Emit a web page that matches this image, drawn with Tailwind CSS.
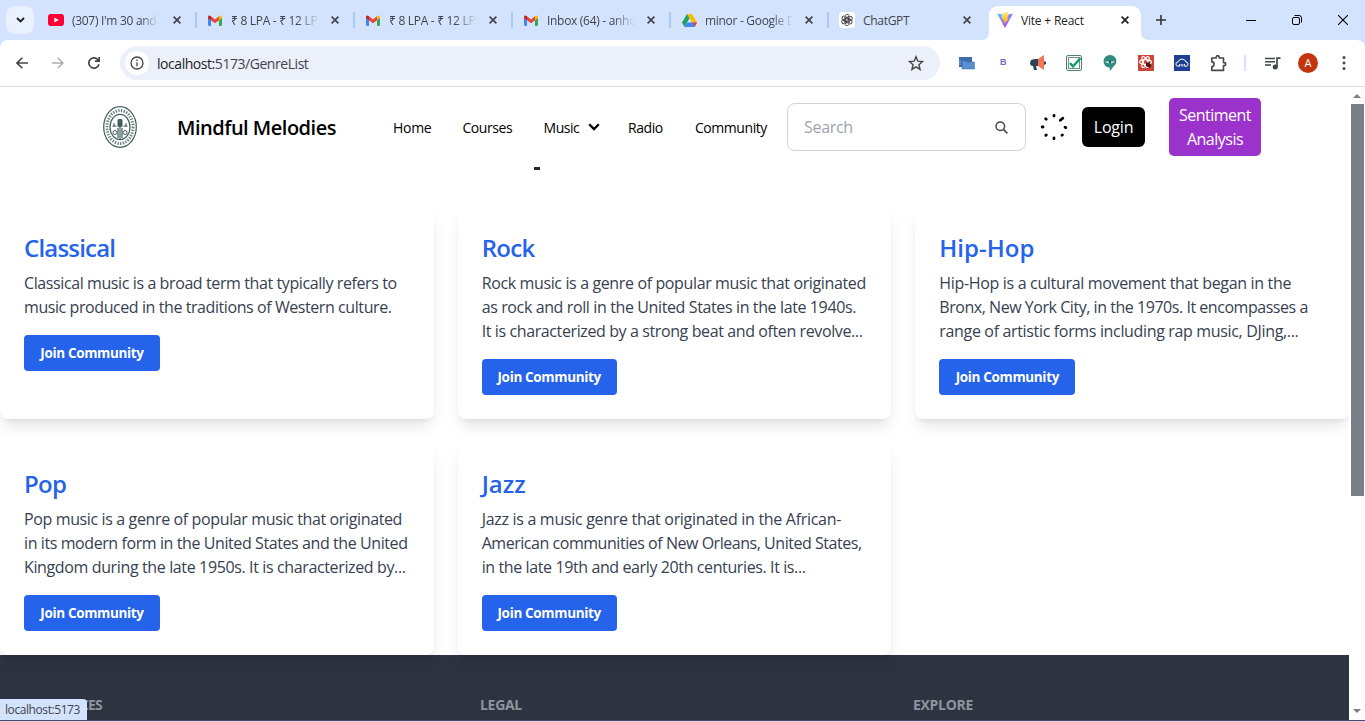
<!DOCTYPE html>
<html lang="en">
<head>
<meta charset="utf-8">
<title>Vite + React</title>
<script src="https://cdn.jsdelivr.net/npm/@tailwindcss/browser@4"></script>
</head>
<body class="h-[721px] w-[1365px] overflow-hidden bg-white font-['Open_Sans','Noto_Sans',sans-serif] text-black">
<svg class="hidden">
  <symbol id="gmail" viewBox="0 0 14 11"><path d="M0 2v7.600Q0 11 1.200 11H3V4.600L0 2z" fill="#4285f4"/><path d="M14 2v7.600q0 1.400-1.200 1.400H11V4.600z" fill="#34a853"/><path d="M3 1.300 7 4.500l4-3.200v3.900L7 8.300 3 5.200z" fill="#ea4335"/><path d="M0 1.800Q.3-.6 3 1.300v3.900L0 2.900z" fill="#c5221f"/><path d="M14 1.800Q13.700-.6 11 1.300v3.900l3-2.300z" fill="#fbbc04"/></symbol>
  <symbol id="x" viewBox="0 0 8 8"><path d="M.6.6l6.800 6.800M7.400.6L.6 7.400" stroke="currentColor" stroke-width="1.700"/></symbol>
</svg>
<div class="flex h-full flex-col">
  <header class="h-[87px] shrink-0 border-b border-[#dcdde0] bg-[#d3e2fd]">
    <div class="flex h-10 items-start text-[12px] tracking-[-0.3px] text-[#41454b]">
      <div class="ml-[6px] mt-[6px] flex h-7 w-7 items-center justify-center rounded-[9px] bg-[#e9f0fe]"><svg class="h-[6px] w-[9px]" viewBox="0 0 9 6" fill="none"><path d="M1 1l3.500 3.500L8 1" stroke="#1f1f1f" stroke-width="1.800"/></svg></div>
      <div class="flex h-10 w-[162px] items-center pl-[14px]">
        <svg class="h-3 w-4 shrink-0" viewBox="0 0 16 12"><rect width="16" height="12" rx="3" fill="#ff0033"/><path d="M6.300 3.400v5.200L10.800 6z" fill="#fff"/></svg>
        <div class="ml-2 w-[86px] overflow-hidden whitespace-nowrap pt-px mask-r-from-80%">(307) I'm 30 and</div>
        <svg class="ml-[15px] h-2 w-2 shrink-0"><use href="#x"/></svg>
      </div>
      <div class="flex h-10 w-[158px] items-center">
        <div class="-ml-[1px] h-4 w-[2px] bg-[#a8c7fa]"></div>
        <svg class="ml-[11px] h-[11px] w-[14px] shrink-0"><use href="#gmail"/></svg>
        <div class="ml-[9px] w-[88px] overflow-hidden whitespace-nowrap pt-px mask-r-from-75%">₹ 8 LPA - ₹ 12 LP</div>
        <svg class="ml-[12px] h-2 w-2 shrink-0"><use href="#x"/></svg>
      </div>
      <div class="flex h-10 w-[158px] items-center">
        <div class="-ml-[1px] h-4 w-[2px] bg-[#a8c7fa]"></div>
        <svg class="ml-[11px] h-[11px] w-[14px] shrink-0"><use href="#gmail"/></svg>
        <div class="ml-[9px] w-[88px] overflow-hidden whitespace-nowrap pt-px mask-r-from-75%">₹ 8 LPA - ₹ 12 LP</div>
        <svg class="ml-[12px] h-2 w-2 shrink-0"><use href="#x"/></svg>
      </div>
      <div class="flex h-10 w-[158px] items-center">
        <div class="-ml-[1px] h-4 w-[2px] bg-[#a8c7fa]"></div>
        <svg class="ml-[11px] h-[11px] w-[14px] shrink-0"><use href="#gmail"/></svg>
        <div class="ml-[9px] w-[88px] overflow-hidden whitespace-nowrap pt-px mask-r-from-75%">Inbox (64) - anho</div>
        <svg class="ml-[12px] h-2 w-2 shrink-0"><use href="#x"/></svg>
      </div>
      <div class="flex h-10 w-[158px] items-center">
        <div class="-ml-[1px] h-4 w-[2px] bg-[#a8c7fa]"></div>
        <svg class="ml-[11px] h-[13px] w-[15px] shrink-0" viewBox="0 0 15 13"><path d="M5 0h5l5 8.500h-5z" fill="#fbbc04"/><path d="M5 0l2.500 4.300L2.500 13 0 8.500z" fill="#1ea362"/><path d="M5 8.500h10L12.500 13h-10z" fill="#4285f4"/><path d="M10.500 8.500H15L12.600 13z" fill="#ea4335"/></svg>
        <div class="ml-[8px] w-[88px] overflow-hidden whitespace-nowrap pt-px mask-r-from-75%">minor - Google D</div>
        <svg class="ml-[12px] h-2 w-2 shrink-0"><use href="#x"/></svg>
      </div>
      <div class="flex h-10 w-[161px] items-center">
        <div class="-ml-[1px] h-4 w-[2px] bg-[#a8c7fa]"></div>
        <svg class="ml-[10px] h-4 w-4 shrink-0" viewBox="0 0 16 16"><rect width="16" height="16" rx="3" fill="#fff"/><g fill="none" stroke="#333" stroke-width=".9"><g id="petal"><path d="M5.800 8.900V4.700a2.400 2.400 0 0 1 4.400-1.200M7.300 7.100l3.500-2"/></g><use href="#petal" transform="rotate(60 8 8)"/><use href="#petal" transform="rotate(120 8 8)"/><use href="#petal" transform="rotate(180 8 8)"/><use href="#petal" transform="rotate(240 8 8)"/><use href="#petal" transform="rotate(300 8 8)"/></g></svg>
        <div class="ml-[8px] w-[88px] whitespace-nowrap pt-px">ChatGPT</div>
        <svg class="ml-[12px] h-2 w-2 shrink-0"><use href="#x"/></svg>
      </div>
      <div class="relative mt-[6px] flex h-[34px] w-[152px] items-center rounded-t-[9px] bg-white pb-[6px] text-[#1f1f1f]">
        <svg class="absolute -left-2 bottom-0 h-2 w-2" viewBox="0 0 8 8"><path d="M8 0v8H0q8 0 8-8z" fill="#fff"/></svg>
        <svg class="absolute -right-2 bottom-0 h-2 w-2" viewBox="0 0 8 8"><path d="M0 0v8h8Q0 8 0 0z" fill="#fff"/></svg>
        <svg class="ml-[8px] h-4 w-4" viewBox="0 0 16 16"><defs><linearGradient id="v1" x1="0" y1="0" x2=".6" y2="1"><stop stop-color="#41d1ff"/><stop offset="1" stop-color="#bd34fe"/></linearGradient><linearGradient id="v2" x1="0" y1="0" x2="0" y2="1"><stop stop-color="#ffea83"/><stop offset="1" stop-color="#ffa800"/></linearGradient></defs><path d="M0 1.500L8 3l8-1.500L8 16z" fill="url(#v1)"/><path d="M11 0L5 1.200l-.4 6 2-.3-.5 2.500 1.500-.3L7.500 12 12 6.200l-1.800.3L11.500 3z" fill="url(#v2)"/></svg>
        <span class="ml-[8px] whitespace-nowrap pt-px tracking-[-0.2px]">Vite + React</span>
        <svg class="absolute right-[12px] top-[10px] h-2 w-2"><use href="#x"/></svg>
      </div>
      <svg class="ml-[15px] mt-[15px] h-[10px] w-[10px]" viewBox="0 0 10 10"><path d="M5 0v10M0 5h10" stroke="#333" stroke-width="1.600"/></svg>
      <div class="ml-auto mr-[17px] mt-[15px] flex items-center gap-[36px] text-black">
        <svg class="h-[10px] w-[10px]" viewBox="0 0 10 10"><path d="M0 5.500h10" stroke="#000"/></svg>
        <svg class="h-[10px] w-[10px]" viewBox="0 0 10 10" fill="none" stroke="#000"><rect x=".5" y="2.500" width="7" height="7" rx="1.500"/><path d="M2.500.5H7q2.500 0 2.500 2.500v4.500"/></svg>
        <svg class="h-[10px] w-[10px]" viewBox="0 0 10 10"><path d="M0 0l10 10M10 0L0 10" stroke="#000" stroke-width="1.100"/></svg>
      </div>
    </div>
    <div class="flex h-[46px] items-center rounded-t-[8px] bg-white pl-[16px]">
      <svg class="h-3 w-3" viewBox="0 0 12 12" fill="none" stroke="#444746" stroke-width="1.600"><path d="M12 6H1M6.300.700L1 6l5.300 5.300"/></svg>
      <svg class="ml-[24px] h-3 w-3" viewBox="0 0 12 12" fill="none" stroke="#aaacae" stroke-width="1.500"><path d="M0 6h11M5.700.700L11 6l-5.300 5.300"/></svg>
      <svg class="ml-[24px] h-3 w-3" viewBox="0 0 12 12" fill="none" stroke="#444746" stroke-width="1.700"><path d="M10.900 7.200A5.100 5.100 0 1 1 10.200 3.200M11.200 0v4.200H7"/></svg>
      <div class="ml-[20px] flex h-[34px] w-[820px] items-center rounded-full bg-[#ecf0fa] pl-[5px]">
        <div class="flex h-6 w-6 items-center justify-center rounded-full bg-white"><svg class="h-[14px] w-[14px]" viewBox="0 0 14 14" fill="none" stroke="#444746" stroke-width="1.300"><circle cx="7" cy="7" r="6"/><path d="M7 6.200v4M7 3.500v1.500"/></svg></div>
        <span class="ml-2 whitespace-nowrap text-[14px] tracking-[-0.45px] text-[#41454b]"><span class="text-[#1f1f1f]">localhost:</span>5173/GenreList</span>
        <svg class="ml-auto mr-[16px] h-4 w-4" viewBox="0 0 16 16" fill="none" stroke="#444746" stroke-width="1.400"><path d="M8 1.700l1.800 4.500 4.800.4-3.700 3.100 1.200 4.700L8 11.900l-4.100 2.500 1.200-4.700L1.400 6.600l4.800-.4z"/></svg>
      </div>
      <svg class="ml-[19px] h-[14px] w-4" viewBox="0 0 16 14"><path d="M0 1h13v10H0z" fill="#3d6cab"/><path d="M0 4h2v5H0z" fill="#5a8cd0"/><path d="M3 5h4l1 1h7.500v7H3z" fill="#5a8fd0" stroke="#3566a5" stroke-width=".5"/></svg>
      <span class="ml-[25px] w-[6px] font-['Liberation_Sans'] text-[9px] font-bold text-[#7468c8]">B</span>
      <svg class="ml-[24px] h-4 w-4" viewBox="0 0 16 16"><path d="M1 5q3-1.500 7-1v7H6l1 4H4l-1-4Q0 11 0 8z" fill="#2f4258"/><path d="M8 4l6-4v15l-6-4z" fill="#f5774d"/><path d="M14 6l2 1v2l-2 1z" fill="#2f4258"/></svg>
      <svg class="ml-5 h-4 w-4" viewBox="0 0 16 16" fill="none"><rect x=".5" y=".5" width="15" height="15" rx="1.500" stroke="#567b78"/><rect x="2.500" y="2.500" width="11" height="11" stroke="#6a928d"/><path d="M4 8l3 3.500L14.500 3" stroke="#0f9d68" stroke-width="2.400"/></svg>
      <svg class="ml-5 h-4 w-4" viewBox="0 0 16 16"><path d="M8 0a6.300 6.300 0 0 1 6.400 6.300c0 3-2.400 4.200-3 5.400L8 16l-.5-3.500C3.500 12.500 1.600 9.500 1.600 6.300A6.300 6.300 0 0 1 8 0z" fill="#2f8c80"/><path d="M2.500 6q2.800 1.200 5.500-.3 2.700 1.500 5.500.3-2.500 3-5.500 1.800-3 1.200-5.500-1.800z" fill="#d7efe8"/><circle cx="8" cy="6.800" r="1.300" fill="#1c4c4a"/></svg>
      <svg class="ml-5 h-4 w-4" viewBox="0 0 16 16"><path d="M0 0h16v16H0z" fill="#d0433a"/><g fill="none" stroke="#fff" stroke-width="1.200"><ellipse cx="7.500" cy="7" rx="6" ry="2.400"/><ellipse cx="7.500" cy="7" rx="6" ry="2.400" transform="rotate(60 7.500 7)"/><ellipse cx="7.500" cy="7" rx="6" ry="2.400" transform="rotate(120 7.500 7)"/></g><path d="M8 8l3-1 2.500 3.500-2 2.500-3.500-2z" fill="#4a1712"/></svg>
      <svg class="ml-5 h-4 w-4" viewBox="0 0 16 16"><path d="M0 0h16v16H0z" fill="#1e3f93"/><path d="M5 11.200H4A2.100 2.100 0 0 1 4 7a4.200 4.200 0 0 1 8 0 2.100 2.100 0 0 1 0 4.200h-1" fill="none" stroke="#fff"/><path d="M5.500 9v2.500M7.200 9v2.500M8.900 9v2.500M10.500 9v2.500" stroke="#fff" stroke-width=".9"/></svg>
      <svg class="ml-5 h-[17px] w-[17px]" viewBox="0 0 17 17"><path d="M1.800 3h4.400V2.200a1.500 1.500 0 0 1 3 0V3h4.300v4.600h.8a1.500 1.500 0 0 1 0 3h-.8V15.400H1.800V11.500a2.300 2.300 0 0 0 0-4.600z" fill="none" stroke="#444746" stroke-width="1.600" stroke-linejoin="round"/></svg>
      <div class="ml-[17px] h-4 w-[2px] bg-[#d3e2fd]"></div>
      <svg class="ml-[19px] h-[13px] w-[16px]" viewBox="0 0 16 13"><path d="M0 1.500h10M0 4.700h10M0 8h6" stroke="#444746" stroke-width="1.500"/><path d="M12 10V1.200h3.500" fill="none" stroke="#444746" stroke-width="1.700"/><circle cx="10.200" cy="10" r="2.500" fill="#444746"/></svg>
      <div class="ml-[17px] flex h-5 w-5 items-center justify-center rounded-full bg-[#c2350f] text-[11px] text-white">A</div>
      <svg class="ml-[24px] h-[14px] w-[4px]" viewBox="0 0 4 14" fill="#444746"><circle cx="2" cy="1.600" r="1.500"/><circle cx="2" cy="7" r="1.500"/><circle cx="2" cy="12.400" r="1.500"/></svg>
    </div>
  </header>

  <div class="flex h-[633px] shrink-0">
    <div class="relative w-[1349px] overflow-hidden">
      <nav class="flex h-[80px] items-center pl-[103px]">
        <svg class="h-[42px] w-[34px] shrink-0" viewBox="0 0 34 42" fill="none" stroke="#3f5f5a"><ellipse cx="17" cy="21" rx="16.300" ry="20.300" stroke-width="1.200"/><ellipse cx="17" cy="21" rx="13" ry="16.500" stroke-width="3" stroke-dasharray="1.400 1.300" opacity=".75"/><ellipse cx="17" cy="21" rx="10" ry="12.700" stroke-width="1.200"/><path d="M17 19v14M15 22v10M19 22v10" stroke-width="1.200"/><rect x="14.500" y="13" width="5" height="8" rx="1.500" fill="#3f5f5a" stroke="none"/><path d="M11 17v4M23 17v4M9.500 20h4M20.500 20h4"/><circle cx="12" cy="26.500" r="2"/><circle cx="22" cy="26.500" r="2"/></svg>
        <span class="ml-10 w-[216px] whitespace-nowrap pt-[2px] text-[20px] font-semibold tracking-[-0.5px]">Mindful Melodies</span>
        <ul class="flex items-center whitespace-nowrap text-[14px] tracking-[-0.45px]">
          <li class="w-[69.500px] tracking-[-0.3px]">Home</li>
          <li class="w-[81px]">Courses</li>
          <li class="flex w-[84.500px] items-center"><span class="w-[44px]">Music</span><svg class="h-[8px] w-[12px]" viewBox="0 0 12 8" fill="none"><path d="M1.200 1.200L6 6l4.800-4.800" stroke="#000" stroke-width="2.300"/></svg></li>
          <li class="w-[67px]">Radio</li>
          <li class="w-[92px]">Community</li>
        </ul>
        <div class="flex h-12 w-[239px] items-center rounded-lg border border-[#d1d3d6] pl-4 text-[16px] tracking-[-0.3px] text-[#9ca3af]">Search<svg class="ml-auto mr-[17px] h-[13px] w-[13px]" viewBox="0 0 13 13" fill="none" stroke="#444" stroke-width="1.500"><circle cx="5.300" cy="5.300" r="4.300"/><path d="M8.400 8.400l4 4"/></svg></div>
        <svg class="ml-[14px] h-7 w-7" viewBox="0 0 28 28" stroke="#000" stroke-width="2.800" stroke-linecap="round"><path d="M14 2.300v.8M14 24.900v.8M2.200 14h.8M25 14.200l.8.400M5.700 5.800l.5.400M22 22.300l.4-.4M5.800 22.300l.5-.4M20.300 7.300l2.500-2.100"/></svg>
        <div class="ml-[14px] flex h-10 w-[63px] items-center justify-center rounded-md bg-black tracking-[-0.2px] text-white">Login</div>
        <div class="ml-6 h-[58px] w-[92px] rounded-[5px] bg-[#9a32cb] py-[5px] text-center leading-6 tracking-[-0.5px] text-white">Sentiment<br>Analysis</div>
      </nav>
      <div class="flex h-10 pl-[534px]"><div class="h-[3px] w-[6px] bg-[#1f2937]"></div></div>
      <main class="grid grid-cols-3 gap-6 text-[#374151]">
        <section class="relative h-[212px] rounded-lg bg-white p-6 shadow-lg">
          <h2 class="h-8 text-2xl leading-[34px] font-semibold tracking-[-0.8px] text-[#2563eb]">Classical</h2>
          <p class="mt-2 whitespace-nowrap leading-6"><span class="tracking-[-0.4px]">Classical music is a broad term that typically refers to</span><br><span class="tracking-[-0.42px]">music produced in the traditions of Western culture.</span></p>
          <div class="mt-4 flex h-9 w-[136px] items-center justify-center rounded bg-[#2563eb] text-[13.500px] font-bold tracking-[-0.35px] text-white">Join Community</div>
        </section>
        <section class="relative h-[212px] rounded-lg bg-white p-6 shadow-lg">
          <h2 class="h-8 text-2xl leading-[34px] font-semibold tracking-[-0.7px] text-[#2563eb]">Rock</h2>
          <p class="mt-2 whitespace-nowrap leading-6"><span class="tracking-[-0.37px]">Rock music is a genre of popular music that originated</span><br><span class="tracking-[-0.38px]">as rock and roll in the United States in the late 1940s.</span><br><span class="tracking-[-0.39px]">It is characterized by a strong beat and often revolve...</span></p>
          <div class="mt-4 flex h-9 w-[135px] items-center justify-center rounded bg-[#2563eb] text-[13.500px] font-bold tracking-[-0.35px] text-white">Join Community</div>
        </section>
        <section class="relative h-[212px] rounded-lg bg-white p-6 shadow-lg">
          <h2 class="h-8 text-2xl leading-[34px] font-semibold text-[#2563eb]">Hip-Hop</h2>
          <p class="mt-2 whitespace-nowrap leading-6"><span class="tracking-[-0.33px]">Hip-Hop is a cultural movement that began in the</span><br><span class="tracking-[-0.46px]">Bronx, New York City, in the 1970s. It encompasses a</span><br><span class="tracking-[-0.34px]">range of artistic forms including rap music, DJing,...</span></p>
          <div class="mt-4 flex h-9 w-[136px] items-center justify-center rounded bg-[#2563eb] text-[13.500px] font-bold tracking-[-0.35px] text-white">Join Community</div>
        </section>
        <section class="relative h-[212px] rounded-lg bg-white p-6 shadow-lg">
          <h2 class="h-8 text-2xl leading-[34px] font-semibold tracking-[-0.7px] text-[#2563eb]">Pop</h2>
          <p class="mt-2 whitespace-nowrap leading-6"><span class="tracking-[-0.37px]">Pop music is a genre of popular music that originated</span><br><span class="tracking-[-0.41px]">in its modern form in the United States and the United</span><br><span class="tracking-[-0.37px]">Kingdom during the late 1950s. It is characterized by...</span></p>
          <div class="mt-4 flex h-9 w-[136px] items-center justify-center rounded bg-[#2563eb] text-[13.500px] font-bold tracking-[-0.35px] text-white">Join Community</div>
        </section>
        <section class="relative h-[212px] rounded-lg bg-white p-6 shadow-lg">
          <h2 class="h-8 text-2xl leading-[34px] font-semibold text-[#2563eb]">Jazz</h2>
          <p class="mt-2 whitespace-nowrap leading-6"><span class="tracking-[-0.3px]">Jazz is a music genre that originated in the African-</span><br><span class="tracking-[-0.46px]">American communities of New Orleans, United States,</span><br><span class="tracking-[-0.39px]">in the late 19th and early 20th centuries. It is...</span></p>
          <div class="mt-4 flex h-9 w-[135px] items-center justify-center rounded bg-[#2563eb] text-[13.500px] font-bold tracking-[-0.35px] text-white">Join Community</div>
        </section>
      </main>
      <footer class="grid h-[70px] grid-cols-[434px_433px_1fr] bg-[#2d3340] pl-[46px] pt-10 text-sm font-bold tracking-[-0.3px] text-[#8f949d]">
        <div class="tracking-[-0.9px]">SERVICES</div>
        <div>LEGAL</div>
        <div>EXPLORE</div>
      </footer>
      <div class="absolute bottom-0 left-0 flex h-[21px] w-[87px] items-center rounded-tr bg-[#d3e2fd] pl-[5px] text-[12px] tracking-[-0.42px] text-[#41454b]">localhost:5173</div>
    </div>
    <div class="flex w-4 flex-col items-center bg-white">
      <svg class="mt-[7px] h-[4px] w-[8px]" viewBox="0 0 8 4"><path d="M4 0l4 4H0z" fill="#7a7f87"/></svg>
      <div class="ml-px mt-[6px] h-[392px] w-[13px] bg-[#7a7f87]"></div>
      <svg class="mb-[7px] mt-auto h-[4px] w-[8px]" viewBox="0 0 8 4"><path d="M0 0h8L4 4z" fill="#7a7f87"/></svg>
    </div>
  </div>
  <div class="h-px bg-[#3c5079]"></div>
</div>
</body>
</html>
